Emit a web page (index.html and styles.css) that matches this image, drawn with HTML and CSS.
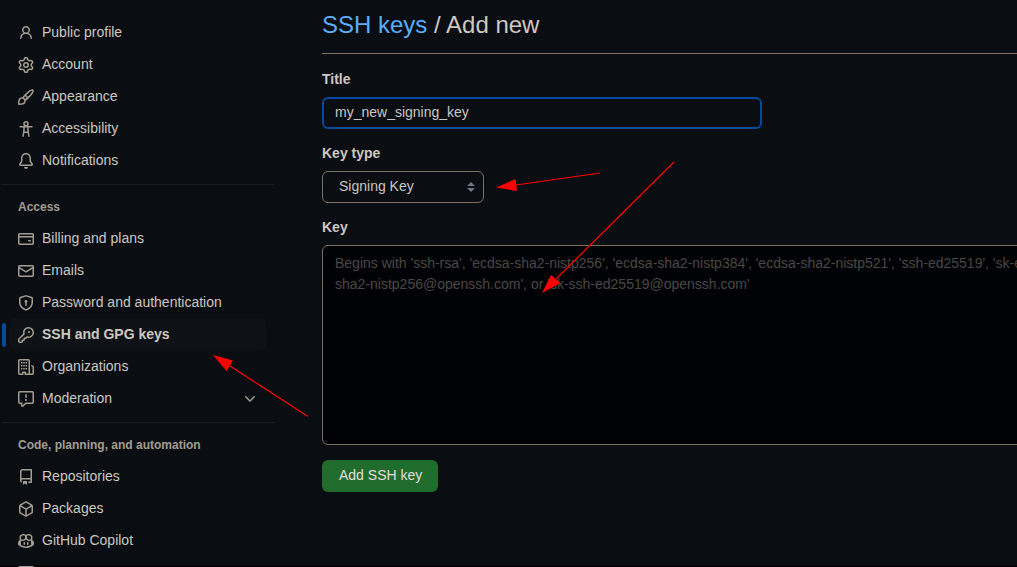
FILE: index.html
```
<!DOCTYPE html>
<html lang="en">
<head>
<meta charset="utf-8">
<title>Add new SSH key</title>
<link rel="stylesheet" href="styles.css">
</head>
<body>
<div class="page">
  <nav class="sidebar" aria-label="Settings">
    <ul class="nav-group">
      <li><a class="nav-item" href="#"><svg class="icon" viewBox="0 0 16 16"><path d="M10.561 8.073a6.005 6.005 0 0 1 3.432 5.142.75.75 0 1 1-1.498.07 4.5 4.5 0 0 0-8.99 0 .75.75 0 0 1-1.498-.07 6.004 6.004 0 0 1 3.431-5.142 3.999 3.999 0 1 1 5.123 0ZM10.5 5a2.5 2.5 0 1 0-5 0 2.5 2.5 0 0 0 5 0Z"/></svg><span>Public profile</span></a></li>
      <li><a class="nav-item" href="#"><svg class="icon" viewBox="0 0 16 16"><path d="M8 0a8.2 8.2 0 0 1 .701.031C9.444.095 9.99.645 10.16 1.29l.288 1.107c.018.066.079.158.212.224.231.114.454.243.668.386.123.082.233.09.299.071l1.103-.303c.644-.176 1.392.021 1.82.63.27.385.506.792.704 1.218.315.675.111 1.422-.364 1.891l-.814.806c-.049.048-.098.147-.088.294.016.257.016.515 0 .772-.01.147.038.246.088.294l.814.806c.475.469.679 1.216.364 1.891a7.977 7.977 0 0 1-.704 1.217c-.428.61-1.176.807-1.82.63l-1.102-.302c-.067-.019-.177-.011-.3.071a5.909 5.909 0 0 1-.668.386c-.133.066-.194.158-.211.224l-.29 1.106c-.168.646-.715 1.196-1.458 1.26a8.006 8.006 0 0 1-1.402 0c-.743-.064-1.289-.614-1.458-1.26l-.289-1.106c-.018-.066-.079-.158-.212-.224a5.738 5.738 0 0 1-.668-.386c-.123-.082-.233-.09-.299-.071l-1.103.303c-.644.176-1.392-.021-1.82-.63a8.12 8.12 0 0 1-.704-1.218c-.315-.675-.111-1.422.363-1.891l.815-.806c.05-.048.098-.147.088-.294a6.214 6.214 0 0 1 0-.772c.01-.147-.038-.246-.088-.294l-.815-.806C.635 6.045.431 5.298.746 4.623a7.92 7.92 0 0 1 .704-1.217c.428-.61 1.176-.807 1.82-.63l1.102.302c.067.019.177.011.3-.071.214-.143.437-.272.668-.386.133-.066.194-.158.211-.224l.29-1.106C6.009.645 6.556.095 7.299.03 7.53.01 7.764 0 8 0Zm-.571 1.525c-.036.003-.108.036-.137.146l-.289 1.105c-.147.561-.549.967-.998 1.189-.173.086-.34.183-.5.29-.417.278-.97.423-1.529.27l-1.103-.303c-.109-.03-.175.016-.195.045-.22.312-.412.644-.573.99-.014.031-.021.11.059.19l.815.806c.411.406.562.957.53 1.456a4.709 4.709 0 0 0 0 .582c.032.499-.119 1.05-.53 1.456l-.815.806c-.081.08-.073.159-.059.19.162.346.353.677.573.989.02.03.085.076.195.046l1.102-.303c.56-.153 1.113-.008 1.53.27.161.107.328.204.501.29.447.222.85.629.997 1.189l.289 1.105c.029.109.101.143.137.146a6.6 6.6 0 0 0 1.142 0c.036-.003.108-.036.137-.146l.289-1.105c.147-.561.549-.967.998-1.189.173-.086.34-.183.5-.29.417-.278.97-.423 1.529-.27l1.103.303c.109.029.175-.016.195-.045.22-.313.411-.644.573-.99.014-.031.021-.11-.059-.19l-.815-.806c-.411-.406-.562-.957-.53-1.456a4.709 4.709 0 0 0 0-.582c-.032-.499.119-1.05.53-1.456l.815-.806c.081-.08.073-.159.059-.19a6.464 6.464 0 0 0-.573-.989c-.02-.03-.085-.076-.195-.046l-1.102.303c-.56.153-1.113.008-1.53-.27a4.44 4.44 0 0 0-.501-.29c-.447-.222-.85-.629-.997-1.189l-.289-1.105c-.029-.11-.101-.143-.137-.146a6.6 6.6 0 0 0-1.142 0ZM11 8a3 3 0 1 1-6 0 3 3 0 0 1 6 0ZM9.5 8a1.5 1.5 0 1 0-3.001.001A1.5 1.5 0 0 0 9.5 8Z"/></svg><span>Account</span></a></li>
      <li><a class="nav-item" href="#"><svg class="icon" viewBox="0 0 16 16"><path d="M11.134 1.535c.7-.509 1.416-.942 2.076-1.155.649-.21 1.463-.267 2.069.34.603.601.568 1.411.368 2.07-.202.668-.624 1.39-1.125 2.096-1.011 1.424-2.496 2.987-3.775 4.249-1.098 1.084-2.132 1.839-3.04 2.3a3.744 3.744 0 0 1-1.055 3.217c-.431.431-1.065.691-1.657.861-.614.177-1.294.287-1.914.357A21.151 21.151 0 0 1 .797 16H.743a.75.75 0 0 1-.743-.742v-.054a21.25 21.25 0 0 1 .13-2.284c.067-.647.187-1.287.358-1.914.17-.591.43-1.226.86-1.657a3.746 3.746 0 0 1 3.227-1.054c.466-.893 1.225-1.907 2.314-2.982 1.271-1.255 2.833-2.75 4.246-3.777ZM1.62 13.089c-.051.464-.086.929-.104 1.395.466-.018.932-.053 1.396-.104a10.511 10.511 0 0 0 1.668-.309c.526-.151.856-.325 1.011-.48a2.25 2.25 0 1 0-3.182-3.182c-.155.155-.329.485-.48 1.01a10.515 10.515 0 0 0-.309 1.67Zm10.396-10.34c-1.224.89-2.605 2.189-3.822 3.384l1.718 1.718c1.21-1.205 2.51-2.597 3.387-3.833.47-.662.78-1.227.912-1.662.134-.444.032-.551.009-.575h-.001V1.78c-.014-.014-.113-.113-.548.027-.432.14-.995.462-1.655.942Zm-4.832 7.266-.001.001a9.859 9.859 0 0 0 1.63-1.142L7.155 7.216a9.7 9.7 0 0 0-1.161 1.607c.482.302.889.71 1.19 1.192Z"/></svg><span>Appearance</span></a></li>
      <li><a class="nav-item" href="#"><svg class="icon icon-line" viewBox="0 0 16 16"><circle cx="8" cy="2.75" r="2"/><path d="M1.500 5.750h13M6 5.750v3.500L5 15.750M10 5.750v3.500L11 15.750M6 11.250h4"/></svg><span>Accessibility</span></a></li>
      <li><a class="nav-item" href="#"><svg class="icon" viewBox="0 0 16 16"><path d="M8 16a2 2 0 0 0 1.985-1.75c.017-.137-.097-.25-.235-.25h-3.5c-.138 0-.252.113-.235.25A2 2 0 0 0 8 16ZM3 5a5 5 0 0 1 10 0v2.947c0 .05.015.098.042.139l1.703 2.555A1.519 1.519 0 0 1 13.482 13H2.518a1.516 1.516 0 0 1-1.263-2.36l1.703-2.554A.255.255 0 0 0 3 7.947Zm5-3.5A3.5 3.5 0 0 0 4.5 5v2.947c0 .346-.102.683-.294.97l-1.703 2.556a.017.017 0 0 0-.003.01l.001.006c0 .002.002.004.004.006l.006.004.007.001h10.964l.007-.001.006-.004.004-.006.001-.007a.017.017 0 0 0-.003-.01l-1.703-2.554a1.745 1.745 0 0 1-.294-.97V5A3.5 3.5 0 0 0 8 1.5Z"/></svg><span>Notifications</span></a></li>
    </ul>

    <h2 class="nav-heading">Access</h2>
    <ul class="nav-group">
      <li><a class="nav-item" href="#"><svg class="icon" viewBox="0 0 16 16"><path d="M10.75 9a.75.75 0 0 0 0 1.5h1.5a.75.75 0 0 0 0-1.5h-1.5Z"/><path d="M0 3.75C0 2.784.784 2 1.75 2h12.5c.966 0 1.75.784 1.75 1.75v8.5A1.75 1.75 0 0 1 14.25 14H1.75A1.75 1.75 0 0 1 0 12.25ZM14.5 6.5h-13v5.75c0 .138.112.25.25.25h12.5a.25.25 0 0 0 .25-.25Zm0-2.75a.25.25 0 0 0-.25-.25H1.75a.25.25 0 0 0-.25.25V5h13Z"/></svg><span>Billing and plans</span></a></li>
      <li><a class="nav-item" href="#"><svg class="icon" viewBox="0 0 16 16"><path d="M1.75 2h12.5c.966 0 1.75.784 1.75 1.75v8.5A1.75 1.75 0 0 1 14.25 14H1.75A1.75 1.75 0 0 1 0 12.25v-8.5C0 2.784.784 2 1.75 2ZM1.5 12.251c0 .138.112.25.25.25h12.5a.25.25 0 0 0 .25-.25V5.809L8.38 9.397a.75.75 0 0 1-.76 0L1.5 5.809v6.442Zm13-8.181v-.32a.25.25 0 0 0-.25-.25H1.75a.25.25 0 0 0-.25.25v.32L8 7.88Z"/></svg><span>Emails</span></a></li>
      <li><a class="nav-item" href="#"><svg class="icon" viewBox="0 0 16 16"><path d="m8.533.133 5.25 1.68A1.75 1.75 0 0 1 15 3.48V7c0 1.566-.32 3.182-1.303 4.682-.983 1.498-2.585 2.813-5.032 3.855a1.697 1.697 0 0 1-1.33 0c-2.447-1.042-4.049-2.357-5.032-3.855C1.32 10.182 1 8.566 1 7V3.48a1.755 1.755 0 0 1 1.217-1.667l5.25-1.68a1.748 1.748 0 0 1 1.066 0Zm-.61 1.429.001.001-5.25 1.68a.251.251 0 0 0-.174.237V7c0 1.36.275 2.666 1.057 3.859.784 1.194 2.121 2.342 4.366 3.298a.196.196 0 0 0 .154 0c2.245-.957 3.582-2.103 4.366-3.297C13.225 9.666 13.5 8.358 13.5 7V3.48a.25.25 0 0 0-.174-.238l-5.25-1.68a.25.25 0 0 0-.153 0ZM9.5 6.5c0 .536-.286 1.032-.75 1.3v2.45a.75.75 0 0 1-1.5 0V7.8A1.5 1.5 0 1 1 9.5 6.5Z"/></svg><span>Password and authentication</span></a></li>
      <li><a class="nav-item nav-item-current" href="#" aria-current="page"><svg class="icon" viewBox="0 0 16 16"><path d="M10.5 0a5.499 5.499 0 1 1-1.288 10.848l-.932.932a.749.749 0 0 1-.53.22H7v.75a.749.749 0 0 1-.22.53l-.5.5a.749.749 0 0 1-.53.22H5v.75a.749.749 0 0 1-.22.53l-.5.5a.749.749 0 0 1-.53.22h-2A1.75 1.75 0 0 1 0 14.25v-2c0-.199.079-.389.22-.53l4.932-4.932A5.5 5.5 0 0 1 10.5 0Zm-4 5.5c-.001.431.069.86.205 1.269a.75.75 0 0 1-.181.768L1.5 12.56v1.69c0 .138.112.25.25.25h1.69l.06-.06v-1.19a.75.75 0 0 1 .75-.75h1.19l.06-.06v-1.19a.75.75 0 0 1 .75-.75h1.19l1.023-1.025a.75.75 0 0 1 .768-.18A4 4 0 1 0 6.5 5.5ZM11 6a1 1 0 1 1 0-2 1 1 0 0 1 0 2Z"/></svg><span>SSH and GPG keys</span></a></li>
      <li><a class="nav-item" href="#"><svg class="icon" viewBox="0 0 16 16"><path d="M1.75 16A1.75 1.75 0 0 1 0 14.25V1.75C0 .784.784 0 1.75 0h8.5C11.216 0 12 .784 12 1.75v12.5c0 .085-.006.168-.018.25h2.268a.25.25 0 0 0 .25-.25V8.285a.25.25 0 0 0-.111-.208l-1.055-.703a.749.749 0 1 1 .832-1.248l1.055.703c.487.325.779.871.779 1.456v5.965A1.75 1.75 0 0 1 14.25 16h-3.5a.766.766 0 0 1-.197-.026c-.099.017-.2.026-.303.026h-3a.75.75 0 0 1-.75-.75V14h-1v1.25a.75.75 0 0 1-.75.75Zm-.25-1.75c0 .138.112.25.25.25H4v-1.25a.75.75 0 0 1 .75-.75h2.5a.75.75 0 0 1 .75.75v1.25h2.25a.25.25 0 0 0 .25-.25V1.75a.25.25 0 0 0-.25-.25h-8.5a.25.25 0 0 0-.25.25ZM3 3h1.5v1.5H3ZM5.25 3h1.5v1.5h-1.5ZM7.5 3H9v1.5H7.5ZM3 6h1.5v1.5H3ZM5.25 6h1.5v1.5h-1.5ZM7.5 6H9v1.5H7.5ZM3 9h1.5v1.5H3ZM5.25 9h1.5v1.5h-1.5ZM7.5 9H9v1.5H7.5Z"/></svg><span>Organizations</span></a></li>
      <li><button class="nav-item" type="button" aria-expanded="false"><svg class="icon" viewBox="0 0 16 16"><path d="M0 1.75C0 .784.784 0 1.75 0h12.5C15.216 0 16 .784 16 1.75v9.5A1.75 1.75 0 0 1 14.25 13H8.06l-2.573 2.573A1.458 1.458 0 0 1 3 14.543V13H1.75A1.75 1.75 0 0 1 0 11.25Zm1.75-.25a.25.25 0 0 0-.25.25v9.5c0 .138.112.25.25.25h2a.75.75 0 0 1 .75.75v2.19l2.72-2.72a.749.749 0 0 1 .53-.22h6.5a.25.25 0 0 0 .25-.25v-9.5a.25.25 0 0 0-.25-.25Zm7 2.25v2.5a.75.75 0 0 1-1.5 0v-2.5a.75.75 0 0 1 1.5 0ZM9 9a1 1 0 1 1-2 0 1 1 0 0 1 2 0Z"/></svg><span class="nav-label">Moderation</span><svg class="icon" viewBox="0 0 16 16"><path d="M12.78 5.22a.749.749 0 0 1 0 1.06l-4.25 4.25a.749.749 0 0 1-1.06 0L3.22 6.28a.749.749 0 1 1 1.06-1.06L8 8.939l3.72-3.719a.749.749 0 0 1 1.06 0Z"/></svg></button></li>
    </ul>

    <h2 class="nav-heading">Code, planning, and automation</h2>
    <ul class="nav-group">
      <li><a class="nav-item" href="#"><svg class="icon" viewBox="0 0 16 16"><path d="M2 2.5A2.5 2.5 0 0 1 4.5 0h8.75a.75.75 0 0 1 .75.75v12.5a.75.75 0 0 1-.75.75h-2.5a.75.75 0 0 1 0-1.5h1.75v-2h-8a1 1 0 0 0-.714 1.7.75.75 0 1 1-1.072 1.05A2.495 2.495 0 0 1 2 11.5Zm10.5-1h-8a1 1 0 0 0-1 1v6.708A2.486 2.486 0 0 1 4.5 9h8ZM5 12.25a.25.25 0 0 1 .25-.25h3.5a.25.25 0 0 1 .25.25v3.25a.25.25 0 0 1-.4.2l-1.45-1.087a.249.249 0 0 0-.3 0L5.4 15.7a.25.25 0 0 1-.4-.2Z"/></svg><span>Repositories</span></a></li>
      <li><a class="nav-item" href="#"><svg class="icon" viewBox="0 0 16 16"><path d="m8.878.392 5.25 3.045c.54.314.872.89.872 1.514v6.098a1.75 1.75 0 0 1-.872 1.514l-5.25 3.045a1.75 1.75 0 0 1-1.756 0l-5.25-3.045A1.75 1.75 0 0 1 1 11.049V4.951c0-.624.332-1.201.872-1.514L7.122.392a1.75 1.75 0 0 1 1.756 0ZM7.875 1.69l-4.63 2.685L8 7.133l4.755-2.758-4.63-2.685a.248.248 0 0 0-.25 0ZM2.5 5.677v5.372c0 .09.047.171.125.216l4.625 2.683V8.432Zm6.25 8.271 4.625-2.683a.25.25 0 0 0 .125-.216V5.677L8.75 8.432Z"/></svg><span>Packages</span></a></li>
      <li><a class="nav-item" href="#"><svg class="icon" viewBox="0 0 16 16"><path d="M7.998 15.035c-4.562 0-7.873-2.914-7.998-3.749V9.338c.085-.628.677-1.686 1.588-2.065.013-.07.024-.143.036-.218.029-.183.06-.384.126-.612-.201-.508-.254-1.084-.254-1.656 0-.87.128-1.769.693-2.484.579-.733 1.494-1.124 2.724-1.261 1.206-.134 2.262.034 2.944.765.05.053.096.108.139.165.044-.057.094-.112.143-.165.682-.731 1.738-.899 2.944-.765 1.23.137 2.145.528 2.724 1.261.566.715.693 1.614.693 2.484 0 .572-.053 1.148-.254 1.656.066.228.098.429.126.612.012.076.024.148.037.218.924.385 1.522 1.471 1.591 2.095v1.872c0 .766-3.351 3.795-8.002 3.795Zm0-1.485c2.28 0 4.584-1.11 5.002-1.433V7.862l-.023-.116c-.49.21-1.075.291-1.727.291-1.146 0-2.059-.327-2.71-.991A3.222 3.222 0 0 1 8 6.303a3.24 3.24 0 0 1-.544.743c-.65.664-1.563.991-2.71.991-.652 0-1.236-.081-1.727-.291l-.023.116v4.255c.419.323 2.722 1.433 5.002 1.433ZM6.762 2.83c-.193-.206-.637-.413-1.682-.297-1.019.113-1.479.404-1.713.7-.247.312-.369.789-.369 1.554 0 .793.129 1.171.308 1.371.162.181.519.379 1.442.379.853 0 1.339-.235 1.638-.54.315-.322.527-.827.617-1.553.117-.935-.037-1.395-.241-1.614Zm4.155-.297c-1.044-.116-1.488.091-1.681.297-.204.219-.359.679-.242 1.614.091.726.303 1.231.618 1.553.299.305.784.54 1.638.54.922 0 1.28-.198 1.442-.379.179-.2.308-.578.308-1.371 0-.765-.123-1.242-.37-1.554-.233-.296-.693-.587-1.713-.7Z"/><path d="M6.25 9.037a.75.75 0 0 1 .75.75v1.501a.75.75 0 0 1-1.5 0V9.787a.75.75 0 0 1 .75-.75Zm4.25.75v1.501a.75.75 0 0 1-1.5 0V9.787a.75.75 0 0 1 1.5 0Z"/></svg><span>GitHub Copilot</span></a></li>
      <li><a class="nav-item" href="#"><svg class="icon icon-line" viewBox="0 0 16 16"><rect x=".75" y="1.75" width="14.5" height="12.5" rx="1"/><path d="M1 6h14"/></svg><span>Pages</span></a></li>
    </ul>
  </nav>

  <main class="content">
    <h1 class="title"><a href="#">SSH keys</a> / Add new</h1>
    <form class="form">
      <div class="fields">
        <div class="field">
          <label for="key-title">Title</label>
          <input class="control text-input" id="key-title" type="text" value="my_new_signing_key">
        </div>
        <div class="field">
          <label for="key-type">Key type</label>
          <div class="select">
            <select class="control select-input" id="key-type">
              <option>Authentication Key</option>
              <option selected>Signing Key</option>
            </select>
            <svg class="select-arrows" viewBox="0 0 8 10"><path d="M4 0l4 4H0ZM4 10l4-4H0Z"/></svg>
          </div>
        </div>
        <div class="field">
          <label for="key-body">Key</label>
          <textarea class="control key-input" id="key-body" placeholder="Begins with 'ssh-rsa', 'ecdsa-sha2-nistp256', 'ecdsa-sha2-nistp384', 'ecdsa-sha2-nistp521', 'ssh-ed25519', 'sk-ecdsa-sha2-nistp256@openssh.com', or 'sk-ssh-ed25519@openssh.com'"></textarea>
        </div>
      </div>
      <button class="submit" type="button">Add SSH key</button>
    </form>
  </main>

  <svg class="arrows" width="700" height="440" viewBox="0 0 700 440" aria-hidden="true">
    <path class="shaft" d="M600 173L516 185M674 162L556 279M308 416.500L230 366"/>
    <path class="head" d="M496 187.500L515.500 179L517 191ZM542 293L551 275L560.500 283ZM213 355L233 360.500L226.500 371Z"/>
  </svg>
</div>
</body>
</html>
```

FILE: styles.css
```
* {
  box-sizing: border-box;
}

body {
  margin: 0;
  background: #0a0d12;
  color: #cdc8c0;
  font: 14px/21px "Liberation Sans", Arial, sans-serif;
}

.page {
  position: relative;
  display: flex;
  gap: 48px;
  height: 100vh;
  padding-left: 2px;
  overflow: hidden;
  box-shadow: inset 0 -1px #000;
}

.sidebar {
  flex: none;
  width: 272px;
  padding-top: 16px;
}

.nav-group {
  margin: 0;
  padding: 0 8px;
  list-style: none;
}

.nav-item {
  position: relative;
  display: flex;
  align-items: flex-start;
  gap: 8px;
  width: 100%;
  height: 32px;
  padding: 6px 8px 5px;
  border: 0;
  border-radius: 6px;
  background: none;
  color: inherit;
  font: inherit;
  text-align: left;
  text-decoration: none;
}

.nav-item-current {
  background: #0e1116;
  font-weight: 700;
}

.nav-item-current::before {
  content: "";
  position: absolute;
  top: 5px;
  left: -8px;
  width: 4px;
  height: 24px;
  border-radius: 2px;
  background: #044a9c;
}

.nav-label {
  flex: 1;
}

.icon {
  flex: none;
  width: 16px;
  height: 16px;
  margin-top: 3px;
  fill: #a39d90;
}

.icon-line {
  fill: none;
  stroke: #a39d90;
  stroke-width: 1.5;
  stroke-linejoin: round;
}

.nav-heading {
  margin: 8px 0 0;
  padding: 13px 16px 6px;
  border-top: 1px solid #191c20;
  color: #a39d90;
  font-size: 12px;
  line-height: 18px;
}

/* The form runs past the right edge of the window. */
.content {
  flex: 1;
  min-width: 0;
  margin-right: -64px;
  padding-top: 7px;
}

.title {
  margin: 0 0 15px;
  padding-bottom: 10px;
  border-bottom: 1px solid #7a7060;
  font-size: 24px;
  font-weight: 400;
  line-height: 36px;
}

.title a {
  color: #58aeff;
  text-decoration: none;
}

.form {
  display: flex;
  flex-direction: column;
  align-items: flex-start;
  gap: 15px;
}

.fields {
  display: flex;
  flex-direction: column;
  gap: 14px;
  width: 100%;
}

.field {
  display: flex;
  flex-direction: column;
  gap: 8px;
}

.field label {
  align-self: flex-start;
  font-weight: 700;
  line-height: 20px;
}

.control {
  border: 1px solid #7a7060;
  border-radius: 6px;
  background: transparent;
  color: inherit;
  font: inherit;
  outline: 0;
}

.text-input {
  width: 440px;
  height: 32px;
  padding: 0 11px 2px;
  border: 2px solid #044a9c;
}

.select {
  display: grid;
  align-items: center;
  width: 162px;
}

.select > * {
  grid-area: 1 / 1;
}

.select-input {
  height: 32px;
  padding: 0 24px 2px 16px;
  appearance: none;
}

.select-arrows {
  justify-self: end;
  width: 8px;
  height: 10px;
  margin-right: 9px;
  fill: #6e7681;
  pointer-events: none;
}

.key-input {
  width: 100%;
  height: 200px;
  padding: 7px 12px;
  background: #010206;
  resize: none;
}

.key-input::placeholder {
  color: #4b4843;
}

.submit {
  height: 32px;
  padding: 0 16px 2px 17px;
  border: 0;
  border-radius: 6px;
  background: #1f6c2c;
  color: #e2dfda;
  font: inherit;
}

.arrows {
  position: absolute;
  top: 0;
  left: 0;
  pointer-events: none;
}

.shaft {
  stroke: #f00;
  stroke-width: 1.25;
}

.head {
  fill: #f00;
}
```
